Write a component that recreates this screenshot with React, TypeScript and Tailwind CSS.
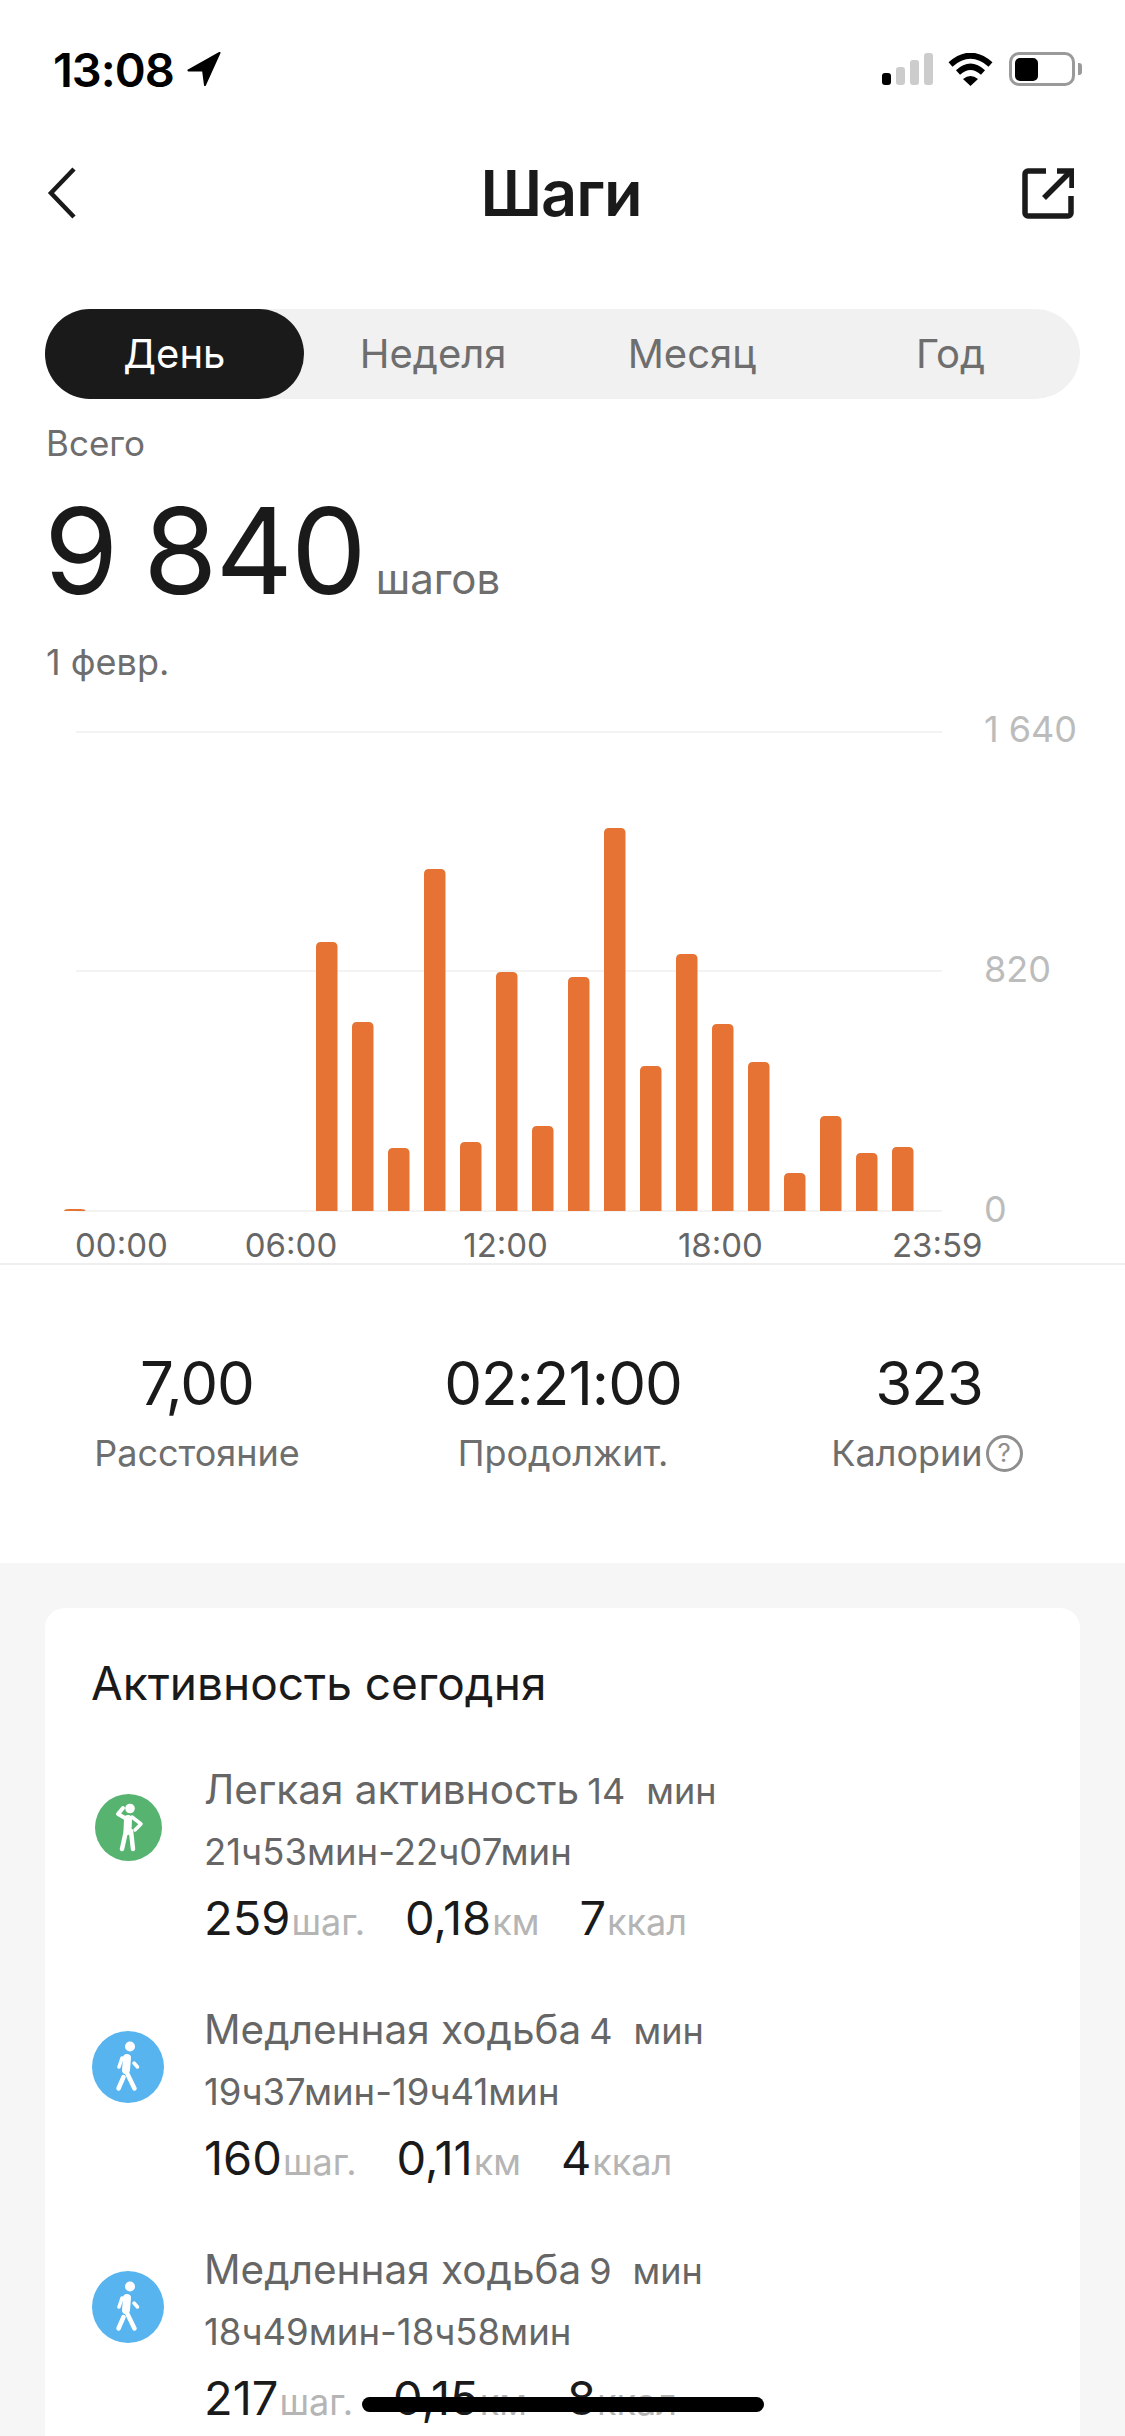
import type { ReactNode } from "react";

// Hourly step bars: [hour slot, top edge of the bar on the chart's y axis].
const BARS: [number, number][] = [
  [0, 1209], [7, 942], [8, 1022], [9, 1148], [10, 869], [11, 1142], [12, 972],
  [13, 1126], [14, 977], [15, 828], [16, 1066], [17, 954], [18, 1024],
  [19, 1062], [20, 1173], [21, 1116], [22, 1153], [23, 1147],
];
const BASELINE = 1211;
const TABS = ["День", "Неделя", "Месяц", "Год"];

const ACTIVITIES = [
  { kind: "light", title: "Легкая активность", mins: "14", time: "21ч53мин-22ч07мин", steps: "259", km: "0,18", kcal: "7" },
  { kind: "walk", title: "Медленная ходьба", mins: "4", time: "19ч37мин-19ч41мин", steps: "160", km: "0,11", kcal: "4" },
  { kind: "walk", title: "Медленная ходьба", mins: "9", time: "18ч49мин-18ч58мин", steps: "217", km: "0,15", kcal: "8" },
];

function StatusBar() {
  return (
    <div className="flex h-[138px] items-center justify-between pl-[53px] pr-[43px]">
      <div className="flex items-center gap-[12px]">
        <span className="text-[47px] font-semibold leading-none tracking-[-1px] text-black">13:08</span>
        <svg viewBox="0 0 36 36" className="h-[35px] w-[36px]" aria-hidden>
          <path d="M34 1 2 19h15l2 15z" fill="#000" stroke="#000" strokeWidth="2" strokeLinejoin="round" />
        </svg>
      </div>
      <div className="flex items-center">
        <svg viewBox="0 0 51 32" className="h-[32px] w-[51px]" aria-hidden>
          <rect x="0" y="20" width="9" height="12" rx="3" fill="#000" />
          <rect x="14" y="14" width="9" height="18" rx="3" fill="#ccc" />
          <rect x="28" y="7" width="9" height="25" rx="3" fill="#ccc" />
          <rect x="42" y="0" width="9" height="32" rx="3" fill="#ccc" />
        </svg>
        <svg viewBox="0 0 45 33" className="ml-[15px] h-[33px] w-[45px]" aria-hidden>
          <path d="M2.5 11.5Q22.5-6 42.5 11.5" fill="none" stroke="#000" strokeWidth="6" />
          <path d="M10 19.5Q22.500 8 35 19.500" fill="none" stroke="#000" strokeWidth="6" />
          <path d="M15 26 22.500 33 30 26Q22.500 20 15 26z" fill="#000" />
        </svg>
        <div className="ml-[16px] flex h-[34px] w-[66px] items-center rounded-[10px] border-[3px] border-[#9a9a9a] pl-[3px]">
          <div className="h-[23px] w-[23px] rounded-[5px] bg-black" />
        </div>
        <div className="ml-[3px] h-[12px] w-[4px] rounded-r-[3px] bg-[#9a9a9a]" />
      </div>
    </div>
  );
}

function Header() {
  return (
    <div className="grid h-[110px] grid-cols-[1fr_auto_1fr] items-center pl-[47px] pr-[51px]">
      <svg viewBox="0 0 30 52" className="h-[52px] w-[30px]" aria-hidden>
        <path d="M27 2 4 26l23 24" fill="none" stroke="#1a1a1a" strokeWidth="4.500" />
      </svg>
      <h1 className="ml-[1px] text-[63px] font-semibold leading-none tracking-[-1px] text-[#1a1a1a]">Шаги</h1>
      <svg viewBox="0 0 52 52" className="h-[52px] w-[52px] justify-self-end" aria-hidden>
        <g fill="none" stroke="#1a1a1a" strokeWidth="5.500">
          <path d="M24 4H6a3 3 0 0 0-3 3v39a3 3 0 0 0 3 3h40a3 3 0 0 0 3-3V29" />
          <path d="M22 31 47 6" />
          <path d="M35 4h15v17" />
        </g>
      </svg>
    </div>
  );
}

function Tabs() {
  return (
    <div className="mx-[45px] mt-[61px] grid h-[90px] grid-cols-4 rounded-[45px] bg-[#f1f1f1]">
      {TABS.map((tab, i) => (
        <div
          key={tab}
          className={`flex items-center justify-center rounded-[45px] text-[40px] ${
            i === 0 ? "bg-[#1a1a1a] text-white" : "text-[#6e6e6e]"
          }`}
        >
          {tab}
        </div>
      ))}
    </div>
  );
}

function Chart() {
  return (
    <>
      <div className="flex h-[508px] pl-[60px]">
        <svg viewBox="60 715 890 508" className="h-[508px] w-[890px] shrink-0" aria-hidden>
          {[732, 971, 1211].map((y) => (
            <rect key={y} x="76" y={y - 1} width="866" height="2" fill="#f3f3f3" />
          ))}
          {BARS.map(([slot, top]) => {
            const x = 64 + slot * 36;
            const h = BASELINE - top;
            return (
              <path
                key={slot}
                d={`M${x} ${BASELINE}V${top + Math.min(h, 5)}q0-${Math.min(h, 5)} 5-${Math.min(h, 5)}h11.500q5 0 5 ${Math.min(h, 5)}V${BASELINE}z`}
                fill="#e67333"
              />
            );
          })}
        </svg>
        <div className="ml-[34px] flex flex-col justify-between text-[36px] leading-[28px] text-[#bcbcbc]">
          <span>1 640</span>
          <span>820</span>
          <span>0</span>
        </div>
      </div>
      <div className="flex h-[40px] items-center pl-[75px] pt-[5px] text-[33px] leading-none text-[#666]">
        <span>00:00</span>
        <span className="ml-[77px]">06:00</span>
        <span className="ml-[126px]">12:00</span>
        <span className="ml-[130px]">18:00</span>
        <span className="ml-[129px]">23:59</span>
      </div>
    </>
  );
}

function Stat({ value, label }: { value: string; label: ReactNode }) {
  return (
    <div className="flex flex-col items-center">
      <div className="flex h-[70px] items-center text-[60px] leading-none tracking-[-1px] text-[#1a1a1a]">{value}</div>
      <div className="mt-[10px] flex h-[50px] items-center text-[36px] leading-none text-[#6e6e6e]">{label}</div>
    </div>
  );
}

function LightIcon() {
  return (
    <svg viewBox="15 23 67 67" className="h-[67px] w-[67px] rounded-full bg-[#56b470]" aria-hidden>
      <circle cx="50" cy="37.500" r="4.800" fill="#fff" />
      <g fill="none" stroke="#fff" strokeLinecap="round" strokeLinejoin="round">
        <path d="M48 48 47.500 60" strokeWidth="8" />
        <path d="M46 60 42 78" strokeWidth="4.500" />
        <path d="M51 60 53 78" strokeWidth="4.500" />
        <path d="M45 47 38 43 43 37" strokeWidth="4" />
        <path d="M52 46 61 53 55 59" strokeWidth="3.500" />
      </g>
    </svg>
  );
}

function WalkIcon() {
  return (
    <svg viewBox="13 12 72 72" className="h-[72px] w-[72px] rounded-full bg-[#58b4ef]" aria-hidden>
      <circle cx="51" cy="27.500" r="5" fill="#fff" />
      <g fill="none" stroke="#fff" strokeLinecap="round" strokeLinejoin="round">
        <path d="M48 39 47 51" strokeWidth="8" />
        <path d="M47 52 55.500 69.500" strokeWidth="4.500" />
        <path d="M44.500 58 39.500 69.500" strokeWidth="4.500" />
        <path d="M43 39 40 48" strokeWidth="3.500" />
        <path d="M55 44 58.500 48" strokeWidth="3.500" />
      </g>
    </svg>
  );
}

function Metric({ value, unit }: { value: string; unit: string }) {
  return (
    <div className="flex items-baseline">
      <span className="text-[47px] leading-none text-[#1a1a1a]">{value}</span>
      <span className="ml-[1px] text-[36px] leading-none text-[#b5b5b5]">{unit}</span>
    </div>
  );
}

export default function App() {
  return (
    <div className="relative h-[2436px] w-[1125px] overflow-hidden bg-white [font-family:Inter,'Noto_Sans',sans-serif]">
      <StatusBar />
      <Header />
      <Tabs />

      <div className="mt-[24px] h-[40px] pl-[46px] text-[35px] leading-[40px] text-[#6e6e6e]">Всего</div>
      <div className="mt-[23px] flex h-[130px] items-baseline pl-[44px]">
        <span className="text-[120px] leading-[130px] tracking-[-2px] text-[#1a1a1a] [word-spacing:-5px]">9 840</span>
        <span className="ml-[11px] text-[42px] text-[#6e6e6e]">шагов</span>
      </div>
      <div className="mt-[26px] h-[40px] pl-[46px] text-[36px] leading-[40px] text-[#6e6e6e]">1 февр.</div>

      <div className="mt-[33px]">
        <Chart />
      </div>
      <div className="h-[2px] bg-[#efefef]" />

      <div className="ml-[14px] grid grid-cols-[366px_366px_366px] pb-[85px] pt-[83px]">
        <Stat value="7,00" label="Расстояние" />
        <Stat value="02:21:00" label="Продолжит." />
        <Stat
          value="323"
          label={
            <>
              Калории
              <span className="ml-[3px] mr-[4px] flex h-[37px] w-[37px] items-center justify-center rounded-full border-[3px] border-[#8f8f8f] text-[26px] text-[#8f8f8f]">
                ?
              </span>
            </>
          }
        />
      </div>

      <div className="h-[900px] bg-[#f6f6f6] px-[45px] pt-[45px]">
        <div className="h-[900px] rounded-[20px] bg-white pl-[46px] pt-[45px]">
          <h2 className="h-[60px] text-[46px] leading-[60px] text-[#1a1a1a]">Активность сегодня</h2>
          <div className="mt-[47px] flex flex-col gap-[50px]">
            {ACTIVITIES.map((a) => (
              <div key={a.time} className="flex">
                <div className="ml-[1px] mt-[31px] flex h-[72px] w-[72px] shrink-0 items-center justify-center">
                  {a.kind === "light" ? <LightIcon /> : <WalkIcon />}
                </div>
                <div className="ml-[40px]">
                  <div className="flex h-[60px] items-baseline text-[#666]">
                    <span className="text-[40.5px] leading-[60px]">{a.title}</span>
                    <span className="ml-[8px] text-[36px]">{a.mins}</span>
                    <span className="ml-[21px] text-[36px]">мин</span>
                  </div>
                  <div className="mt-[2px] h-[60px] text-[36.5px] leading-[60px] text-[#666]">{a.time}</div>
                  <div className="mt-[3px] flex h-[65px] items-center gap-[40px]">
                    <Metric value={a.steps} unit="шаг." />
                    <Metric value={a.km} unit="км" />
                    <Metric value={a.kcal} unit="ккал" />
                  </div>
                </div>
              </div>
            ))}
          </div>
        </div>
      </div>

      {/* home indicator sits over the scrolled content */}
      <div className="absolute left-[362px] top-[2397px] h-[15px] w-[402px] rounded-full bg-black" />
    </div>
  );
}
